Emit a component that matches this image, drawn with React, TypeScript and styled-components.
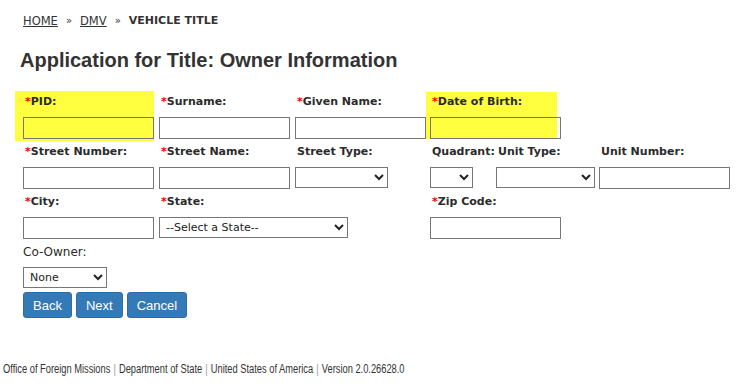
import React from "react";
import styled, { createGlobalStyle } from "styled-components";

const Global = createGlobalStyle`
  html, body { margin: 0; padding: 0; background: #fff; }
  body { font-family: "DejaVu Sans", Tahoma, sans-serif; color: #333; }
`;

const Page = styled.div`
  width: 755px;
  height: 389px;
  display: flex;
  flex-direction: column;
`;

const Breadcrumb = styled.nav`
  padding: 13px 0 0 23px;
  font-size: 11px;
  line-height: 16px;
  display: flex;
  gap: 8px;
  align-items: center;
`;

const Crumb = styled.a`
  color: #333;
  text-decoration: underline;
  font-size: 11.5px;
`;

const Sep = styled.span`
  font-size: 10px;
  color: #333;
`;

const Current = styled.span`
  font-weight: bold;
`;

const Title = styled.h1`
  margin: 19px 0 0 20px;
  font-family: "Liberation Sans", Arial, sans-serif;
  font-size: 20px;
  line-height: 24px;
  font-weight: bold;
  color: #333;
`;

const Form = styled.div`
  margin: 21px 0 0 23px;
  display: grid;
  grid-template-columns: 136px 136px 135px 66px 103px 131px;
  grid-template-rows: 50px 50px 50px auto;
`;

const Cell = styled.div<{ $span?: number; $hl?: "pid" | "dob" }>`
  grid-column: span ${(p) => p.$span ?? 1};
  display: flex;
  flex-direction: column;
  align-items: flex-start;
  position: relative;
  z-index: 0;
  ${(p) =>
    p.$hl === "pid"
      ? `&::before { content: ""; position: absolute; left: -8px; width: 139px; top: -2px; height: 50px; background: #ffff40; z-index: -1; }`
      : ""}
  ${(p) =>
    p.$hl === "dob"
      ? `&::before { content: ""; position: absolute; left: -4px; width: 131px; top: -1px; height: 47px; background: #ffff40; z-index: -1; }`
      : ""}
`;

const Label = styled.label<{ $plain?: boolean }>`
  font-size: ${(p) => (p.$plain ? "12px" : "11px")};
  line-height: 18px;
  height: 18px;
  margin: 0 0 6px ${(p) => (p.$plain ? "0" : "2px")};
  font-weight: ${(p) => (p.$plain ? "normal" : "bold")};
  color: #2b2b2b;
  white-space: nowrap;
`;

const Req = styled.span`
  color: #e00;
  font-weight: bold;
`;

const TextInput = styled.input`
  box-sizing: border-box;
  width: 131px;
  height: 22px;
  border: 1px solid #767676;
  background: transparent;
  margin: 0;
  padding: 0 3px;
  font-family: "DejaVu Sans", sans-serif;
  font-size: 11px;
`;

const Select = styled.select<{ $w: number }>`
  box-sizing: border-box;
  width: ${(p) => p.$w}px;
  height: 21px;
  border: 1px solid #767676;
  background: #fff;
  margin: 0;
  padding: 0 2px;
  font-family: "DejaVu Sans", sans-serif;
  font-size: 11px;
  color: #222;
`;

const Buttons = styled.div`
  display: flex;
  gap: 4px;
  margin: 4px 0 0 23px;
`;

const Button = styled.button`
  box-sizing: border-box;
  height: 26px;
  padding: 0 9px;
  background: #337ab7;
  border: 1px solid #2e6da4;
  border-radius: 3px;
  color: #fff;
  font-family: "Liberation Sans", Arial, sans-serif;
  font-size: 13px;
`;

const Footer = styled.footer`
  margin-top: auto;
  padding: 0 0 12px 3px;
  font-family: "Liberation Sans", Arial, sans-serif;
  font-size: 12px;
  line-height: 16px;
  color: #333;
  white-space: nowrap;
`;

const FooterText = styled.span`
  display: inline-block;
  transform: scaleX(0.775);
  transform-origin: left center;
`;

const Pipe = styled.span`
  color: #999;
  margin: 0 4px;
`;

const R = () => <Req>*</Req>;

export default function App() {
  return (
    <Page>
      <Global />
      <Breadcrumb>
        <Crumb href="#">HOME</Crumb>
        <Sep>»</Sep>
        <Crumb href="#">DMV</Crumb>
        <Sep>»</Sep>
        <Current>VEHICLE TITLE</Current>
      </Breadcrumb>
      <Title>Application for Title: Owner Information</Title>
      <Form>
        <Cell $hl="pid">
          <Label><R />PID:</Label>
          <TextInput />
        </Cell>
        <Cell>
          <Label><R />Surname:</Label>
          <TextInput />
        </Cell>
        <Cell>
          <Label><R />Given Name:</Label>
          <TextInput />
        </Cell>
        <Cell $span={3} $hl="dob">
          <Label><R />Date of Birth:</Label>
          <TextInput />
        </Cell>

        <Cell>
          <Label><R />Street Number:</Label>
          <TextInput />
        </Cell>
        <Cell>
          <Label><R />Street Name:</Label>
          <TextInput />
        </Cell>
        <Cell>
          <Label>Street Type:</Label>
          <Select $w={93}><option></option></Select>
        </Cell>
        <Cell>
          <Label>Quadrant:</Label>
          <Select $w={43}><option></option></Select>
        </Cell>
        <Cell>
          <Label>Unit Type:</Label>
          <Select $w={99}><option></option></Select>
        </Cell>
        <Cell>
          <Label>Unit Number:</Label>
          <TextInput />
        </Cell>

        <Cell>
          <Label><R />City:</Label>
          <TextInput />
        </Cell>
        <Cell $span={2}>
          <Label><R />State:</Label>
          <Select $w={189}><option>--Select a State--</option></Select>
        </Cell>
        <Cell $span={3}>
          <Label><R />Zip Code:</Label>
          <TextInput />
        </Cell>

        <Cell $span={6}>
          <Label $plain>Co-Owner:</Label>
          <Select $w={84}><option>None</option></Select>
        </Cell>
      </Form>
      <Buttons>
        <Button>Back</Button>
        <Button>Next</Button>
        <Button>Cancel</Button>
      </Buttons>
      <Footer>
        <FooterText>
          Office of Foreign Missions<Pipe>|</Pipe>Department of State<Pipe>|</Pipe>United States of America<Pipe>|</Pipe>Version 2.0.26628.0
        </FooterText>
      </Footer>
    </Page>
  );
}
